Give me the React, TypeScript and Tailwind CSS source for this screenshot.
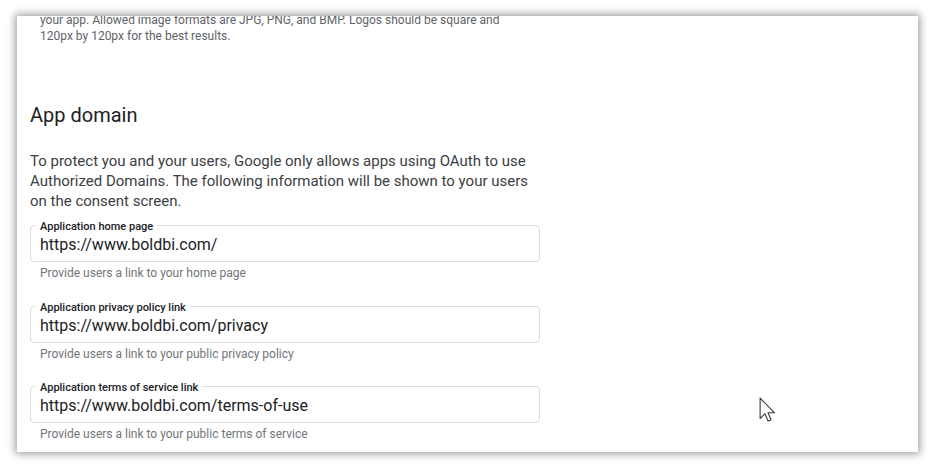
import React from 'react';

interface FieldProps {
  label: string;
  value: string;
  helper: string;
}

const Field: React.FC<FieldProps> = ({ label, value, helper }) => {
  return (
    <div>
      <div className="relative h-[37px] w-[510px] rounded-[4px] border border-[#dadce0]">
        <span className="absolute -top-[6px] left-[5px] bg-white px-[4px] text-[11px] leading-[14px] font-medium text-[#202124]">
          {label}
        </span>
        <div className="pl-[9px] pt-[9px] text-[16px] leading-[20px] text-[#202124]">{value}</div>
      </div>
      <p className="mt-[3px] pl-[10px] text-[12px] leading-[16px] text-[#70757a]">{helper}</p>
    </div>
  );
};

const Cursor = () => (
  <svg width="17" height="26" viewBox="0 0 12 19" className="absolute left-[742px] top-[381px]">
    <path
      d="M0.6 0.8 L0.6 15.6 L4.1 12.3 L6.4 17.6 L8.6 16.6 L6.4 11.5 L11 11.5 Z"
      fill="white"
      stroke="#3c3c3c"
      strokeWidth="0.8"
      strokeLinejoin="round"
    />
  </svg>
);

export default function App() {
  const fields: FieldProps[] = [
    {
      label: 'Application home page',
      value: 'https://www.boldbi.com/',
      helper: 'Provide users a link to your home page',
    },
    {
      label: 'Application privacy policy link',
      value: 'https://www.boldbi.com/privacy',
      helper: 'Provide users a link to your public privacy policy',
    },
    {
      label: 'Application terms of service link',
      value: 'https://www.boldbi.com/terms-of-use',
      helper: 'Provide users a link to your public terms of service',
    },
  ];

  return (
    <div
      className="h-[469px] w-[936px] overflow-hidden bg-white pl-[17px] pt-[16px]"
      style={{ fontFamily: 'Roboto, "Noto Sans", sans-serif' }}
    >
      <div className="relative h-[436px] w-[901px] overflow-hidden bg-white shadow-[0_0_8px_2px_rgba(0,0,0,0.38)]">
        <div className="pl-[13px]">
          {/* helper of the logo field above, scrolled partly out of view */}
          <p className="-mt-[4px] w-[500px] pl-[10px] text-[12px] leading-[16px] text-[#5f6368]">
            your app. Allowed image formats are JPG, PNG, and BMP. Logos should be square and 120px by 120px for the
            best results.
          </p>

          <h2 className="mt-[57px] text-[20px] leading-[28px] text-[#202124]">App domain</h2>

          <p className="mt-[22px] w-[505px] text-[15px] leading-[20px] text-[#3c4043]">
            To protect you and your users, Google only allows apps using OAuth to use Authorized Domains. The following
            information will be shown to your users on the consent screen.
          </p>

          <div className="mt-[14px] flex flex-col gap-[24.5px]">
            {fields.map((f) => (
              <Field key={f.label} {...f} />
            ))}
          </div>
        </div>
        <Cursor />
      </div>
    </div>
  );
}
